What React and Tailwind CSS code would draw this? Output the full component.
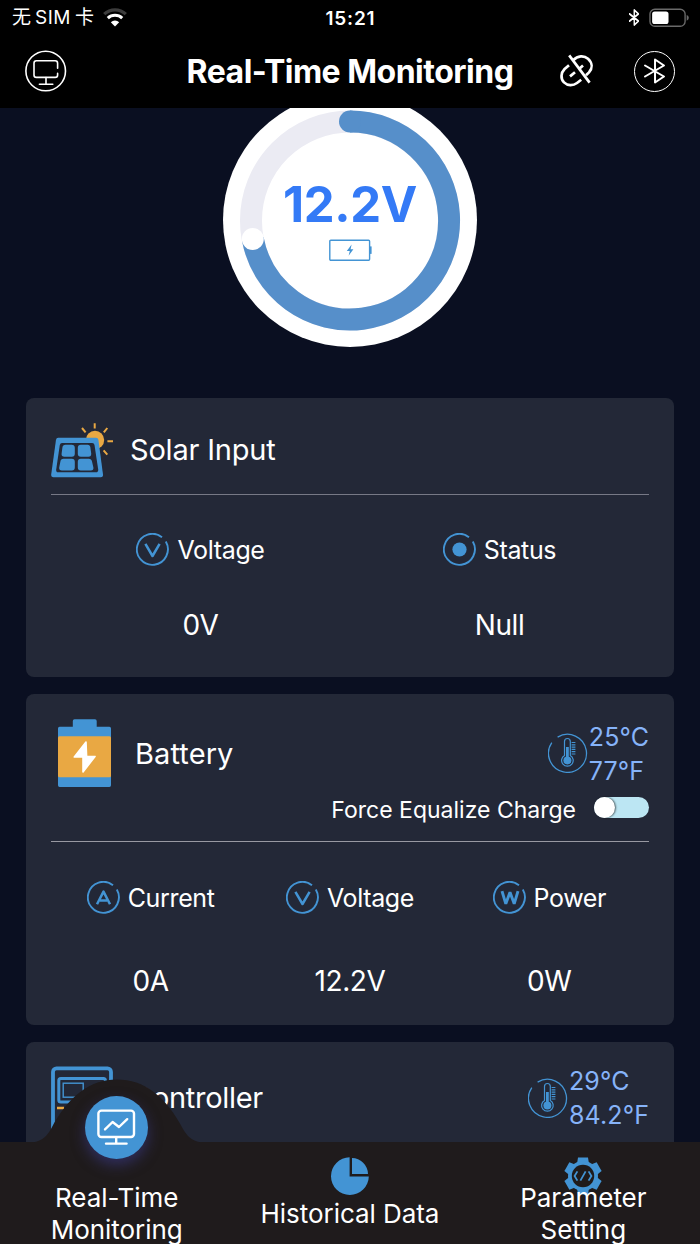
import React, { useState } from 'react';

const BLUE = '#4394d4';
const ORANGE = '#e9a843';

const BluetoothGlyph = ({ className, strokeWidth = 2 }) => (
  <svg viewBox="0 0 20 26" preserveAspectRatio="none" className={className} fill="none" stroke="white" strokeWidth={strokeWidth} strokeLinejoin="round" strokeLinecap="round">
    <path d="M1 7.5 L19 18.5 L10.5 24.5 V1.5 L19 7.5 L1 18.5" />
  </svg>
);

const StatusBar = () => (
  <div className="flex h-9 items-center justify-between bg-black pl-3 pr-[11px] text-white">
    <div className="flex w-[200px] items-center">
      <span className="text-[19px] font-normal leading-9">无</span>
      <span className="ml-[4px] text-[19px] leading-9 tracking-[0.5px]">SIM</span>
      <span className="ml-[4px] text-[19px] font-normal leading-9">卡</span>
      <svg width="26" height="19" viewBox="0 0 26 19" className="-mt-[2px] ml-[8px]" fill="none">
        <path d="M2.2 6.2 A15.5 15.5 0 0 1 23.8 6.2" stroke="#3c3c3c" strokeWidth="3.2" />
        <path d="M5.8 10.2 A10.4 10.4 0 0 1 20.2 10.2" stroke="white" strokeWidth="3" />
        <path d="M13 18.5 L8.8 14.2 A6 6 0 0 1 17.2 14.2 Z" fill="white" />
      </svg>
    </div>
    <span className="mt-px text-[19px] font-semibold leading-9 tracking-[0.8px]">15:21</span>
    <div className="flex w-[200px] items-center justify-end">
      <BluetoothGlyph className="-mt-px mr-[10px] h-[17px] w-[10px]" strokeWidth={2.8} />
      <svg width="40" height="20" viewBox="0 0 41 20" className="-mt-px">
        <rect x="1" y="1" width="36" height="17.5" rx="5" fill="none" stroke="#6a6a6a" strokeWidth="1.4" />
        <rect x="3.2" y="3.4" width="16.8" height="12.8" rx="2.6" fill="white" />
        <path d="M38.6 7 Q40.8 7.6 40.8 9.8 Q40.8 12 38.6 12.8 Z" fill="#6a6a6a" />
      </svg>
    </div>
  </div>
);

const Header = () => (
  <header className="flex h-[72px] items-center justify-between bg-black pb-[2px] pl-[25px] pr-[25px] text-white">
    <div className="w-[150px]">
      <svg width="42" height="42" viewBox="0 0 42 42" fill="none" stroke="white" strokeWidth="1.6" strokeLinecap="round">
        <circle cx="20.7" cy="21" r="19.8" />
        <path d="M32.6 18.3 V13.2 Q32.6 10.8 30.2 10.8 H11.4 Q9 10.8 9 13.2 V25 Q9 27.4 11.4 27.4 H30.2 Q32.6 27.4 32.6 25 V23.4" />
        <path d="M21 27.6 V34 M14.4 34.2 H27.8" />
      </svg>
    </div>
    <h1 className="mt-[2px] whitespace-nowrap text-[32px] font-bold leading-10 tracking-[-0.5px]">Real-Time Monitoring</h1>
    <div className="flex w-[150px] items-center justify-end">
      <svg width="36" height="34" viewBox="0 0 36 34" className="mr-[39px]" fill="none" stroke="white" strokeWidth="2.7">
        <path d="M14.4 6 C18.6 1.6 25 1.2 29 4.8 C33.6 9 33.6 14.4 30 18.4 L27 21.2" />
        <path d="M10 11.2 L5.6 15 C1.8 18.8 1.4 24.8 5 28.4 C8.6 32 14.2 31.8 18 29 L22.2 25.8" />
        <path d="M11 22.4 L16 18.2 M20.6 14.4 L24 11.4" />
        <path d="M10.2 1.4 L30.6 28.6" />
      </svg>
      <div className="flex h-[41px] w-[41px] items-center justify-center rounded-full border-[1.5px] border-white">
        <BluetoothGlyph className="h-[26px] w-[21px] -ml-px" strokeWidth={1.9} />
      </div>
    </div>
  </header>
);

const Gauge = ({ value }) => (
  <div className="relative mx-auto -mt-[15px] flex h-[254px] w-[254px] flex-col items-center rounded-full bg-white">
    <svg viewBox="0 0 254 254" className="absolute inset-0 h-full w-full" fill="none">
      <circle cx="127" cy="127.5" r="99" stroke="#ebebf3" strokeWidth="22" />
      <path d="M127 28.5 A99 99 0 1 1 29.8 146" stroke="#568fca" strokeWidth="22" />
      <circle cx="127" cy="28.5" r="11" fill="#568fca" />
      <circle cx="29.8" cy="146" r="11" fill="white" />
    </svg>
    <span className="relative mt-[82px] text-[49px] font-bold leading-[60px] tracking-[-0.4px] text-[#347af6]">{value}</span>
    <svg width="43" height="22" viewBox="0 0 43 22" className="relative mt-[4px]">
      <rect x="0.8" y="1.2" width="39.8" height="20" rx="1" fill="none" stroke={BLUE} strokeWidth="1.4" />
      <rect x="40.6" y="7.4" width="2" height="7.5" fill={BLUE} />
      <path d="M22.6 5.6 L17.8 12 H20.8 L19.6 16.8 L24.4 10.2 H21.6 Z" fill={BLUE} />
    </svg>
  </div>
);

const SolarIcon = () => (
  <svg width="63" height="55" viewBox="0 0 63 55">
    <g stroke={ORANGE} strokeWidth="2">
      <path d="M43.7 0.3 V5.6 M31 5 L34.6 9.4 M56.3 5 L52.8 9.4 M56.4 18.3 H62 M52.6 27.4 L56.3 31.6" />
    </g>
    <circle cx="44" cy="17" r="9.2" fill={ORANGE} />
    <path d="M7.2 14.8 H45 Q47 14.8 47.4 16.8 L52 51.6 Q52.2 54.2 49.8 54.2 H2.4 Q0 54.2 0.2 51.6 L5 16.8 Q5.3 14.8 7.2 14.8 Z" fill={BLUE} />
    <path d="M11 20 H41.2 Q43.1 20 43.5 22 L47.2 46.4 Q47.4 49.2 45 49.2 H7.2 Q4.8 49.2 5.2 46.4 L8.8 22 Q9.2 20 11 20 Z" fill="#232837" />
    <g fill={BLUE}>
      <path d="M14.4 21.8 H20.6 Q23.8 21.8 23.8 24.8 V30.8 Q23.8 33.8 20.8 33.8 H13.4 Q10.2 33.8 10.6 30.8 L11.4 24.6 Q11.8 21.8 14.4 21.8 Z" />
      <path d="M29.8 21.8 H36.6 Q39 21.8 39.4 24.6 L40.2 30.8 Q40.4 33.8 37.4 33.8 H29.8 Q26.8 33.8 26.8 30.8 V24.8 Q26.8 21.8 29.8 21.8 Z" />
      <path d="M12.4 35.8 H20.8 Q23.8 35.8 23.8 38.8 V44.6 Q23.8 47.6 20.8 47.6 H11 Q7.8 47.6 8.2 44.6 L9.4 38.6 Q9.8 35.8 12.4 35.8 Z" />
      <path d="M29.8 35.8 H37.8 Q40.4 35.8 41 38.6 L42.4 44.6 Q42.8 47.6 39.8 47.6 H29.8 Q26.8 47.6 26.8 44.6 V38.8 Q26.8 35.8 29.8 35.8 Z" />
    </g>
  </svg>
);

const BatteryIcon = () => (
  <svg width="53" height="68" viewBox="0 0 53 68">
    <path d="M16.5 0.3 H37 Q38.7 0.3 38.7 2 V7.8 H51.4 Q53 7.8 53 9.4 V66.2 Q53 68 51.4 68 H1.6 Q0 68 0 66.2 V9.4 Q0 7.8 1.6 7.8 H14.8 V2 Q14.8 0.3 16.5 0.3 Z" fill={BLUE} />
    <rect y="17.2" width="53" height="41" rx="1.5" fill={ORANGE} />
    <path d="M28 23 L16.3 38 H25 V53 L37 37.5 H28.6 Z" fill="white" stroke="white" strokeWidth="1.6" strokeLinejoin="round" />
  </svg>
);

const ControllerIcon = () => (
  <svg width="63" height="76" viewBox="0 0 63 76" fill="none">
    <rect x="2" y="2.4" width="58" height="72" rx="3.5" stroke={BLUE} strokeWidth="3.8" />
    <rect x="7.8" y="12.6" width="46.6" height="23.4" rx="2" stroke={BLUE} strokeWidth="3" />
    <rect x="12.2" y="17.2" width="20" height="14" stroke={BLUE} strokeWidth="1.4" />
    <path d="M6 42 H13 M15 42 H22 M8 50.4 H13" stroke={ORANGE} strokeWidth="2.6" />
  </svg>
);

const glyphs = {
  V: <path d="M9.4 10.8 L16.5 23 L23.6 10.8" strokeLinejoin="round" strokeWidth="2.5" />,
  A: <path d="M10 23.2 L16.5 10.6 L23 23.2 M13 19.4 H20" strokeLinejoin="round" strokeWidth="2.5" />,
  W: <path d="M9 10.2 L12.8 22.8 L17 11.2 L21.2 22.8 L25 10.2" strokeLinejoin="bevel" strokeWidth="2.9" />,
  dot: <circle cx="16.5" cy="16.5" r="7.1" fill={BLUE} stroke="none" />,
};

const MetricIcon = ({ glyph }) => (
  <svg width="33" height="33" viewBox="0 0 33 33" fill="none" stroke={BLUE} className="shrink-0">
    <path d="M26 4.2 A15.5 15.5 0 1 0 29.8 8.6" strokeWidth="1.9" />
    {glyphs[glyph]}
  </svg>
);

const Metric = ({ glyph, label, value, valueClass }) => (
  <div className="flex flex-1 flex-col items-center">
    <div className="flex h-[33px] items-center gap-2">
      <MetricIcon glyph={glyph} />
      <span className="mt-px text-[25px] leading-[34px] tracking-[-0.35px]">{label}</span>
    </div>
    <span className={`text-[28px] leading-9 tracking-[-0.4px] ${valueClass}`}>{value}</span>
  </div>
);

const Temperature = ({ celsius, fahrenheit }) => (
  <div className="flex items-center gap-[2px]">
    <svg width="40" height="40" viewBox="0 0 40 40" fill="none" stroke={BLUE}>
      <path d="M9.6 4.1 A19 19 0 1 1 3.8 9.6" strokeWidth="1.3" />
      <path d="M16.5 22.4 V8.4 A2.9 2.9 0 0 1 22.3 8.4 V22.4 A5.8 5.8 0 1 1 16.5 22.4 Z" strokeWidth="1.2" />
      <path d="M19.4 14 V26" strokeWidth="2.8" />
      <circle cx="19.4" cy="27.4" r="4" fill={BLUE} stroke="none" />
      <path d="M23.6 9.5 H27.4 M23.6 11.8 H27.4 M23.6 14.1 H27.4 M23.6 16.4 H27.4 M23.6 18.7 H27.4 M23.6 21 H27.4" strokeWidth="1.2" />
    </svg>
    <div className="-ml-px mt-px text-[25px] leading-[34px] tracking-[0.1px] text-[#86b3f9]">
      <div>{celsius}</div>
      <div>{fahrenheit}</div>
    </div>
  </div>
);

const navItems = [
  { label: 'Real-Time Monitoring', id: 'monitor' },
  { label: 'Historical Data', id: 'history' },
  { label: 'Parameter Setting', id: 'settings' },
];

const NavIcon = ({ id }) => {
  if (id === 'monitor') {
    return (
      <div className="relative -mt-[46px] mb-[23px] flex h-[63px] w-[63px] shrink-0 items-center justify-center rounded-full bg-[#4394d4] shadow-[0_6px_14px_rgba(62,62,150,0.55)]">
        <svg width="39" height="37" viewBox="0 0 39 37" fill="none" stroke="white" strokeWidth="2.4" strokeLinecap="round" strokeLinejoin="round">
          <rect x="1.4" y="1.6" width="35.6" height="26.4" rx="3" />
          <path d="M8 20.4 L15.6 13 L22 18 L30.2 10.2" />
          <path d="M19.2 28.2 V34 M9 34.6 H29.6" />
        </svg>
      </div>
    );
  }
  if (id === 'history') {
    return (
      <svg width="38" height="38" viewBox="0 0 38 38" className="-mb-[13px] mt-[15px] shrink-0" fill={BLUE}>
        <path d="M18.6 0.2 V19.4 H37.8 A18.9 18.9 0 1 1 18.6 0.2 Z" />
        <path d="M21 1 A16.5 16.5 0 0 1 37 17 H21 Z" />
      </svg>
    );
  }
  return (
    <svg width="38" height="38" viewBox="-19 -19 38 38" className="-mb-[13px] mt-[15px] shrink-0">
      <g fill={BLUE}>
        {[0, 60, 120, 180, 240, 300].map((deg) => (
          <path key={deg} d="M-5 -18.6 H5 L6 -12 H-6 Z" transform={`rotate(${deg})`} />
        ))}
        <circle r="15" />
      </g>
      <circle r="11.2" fill="#1f1b1c" />
      <path d="M-5.6 -4.6 L-8.4 0 L-5.6 4.6 M5.6 -4.6 L8.4 0 L5.6 4.6 M2.6 -4.6 L-2.6 4.6" fill="none" stroke={BLUE} strokeWidth="1.8" />
    </svg>
  );
};

const BottomNav = () => (
  <nav className="relative z-10 flex h-[102px] shrink-0 bg-[#1f1b1c] text-white">
    <svg width="166" height="64" viewBox="0 0 166 64" className="absolute -top-[63px] left-[34px]">
      <path d="M0 64 V63.2 C8 62 13 57 17 50 C34 17 56 0.4 83 0.4 C110 0.4 132 17 149 50 C153 57 158 62 166 63.2 V64 Z" fill="#1f1b1c" />
    </svg>
    {navItems.map((item) => (
      <button key={item.id} className="flex flex-1 flex-col items-center">
        <NavIcon id={item.id} />
        <span className="relative flex h-16 w-[190px] shrink-0 items-center justify-center text-center text-[26px] leading-8 tracking-[-0.05px]">
          {item.label}
        </span>
      </button>
    ))}
  </nav>
);

const App = () => {
  const [equalize, setEqualize] = useState(false);

  return (
    <div className="flex h-[1244px] w-[700px] flex-col overflow-hidden bg-[#0a0f21] font-['Inter','Noto_Sans_CJK_SC',sans-serif] text-white">
      <StatusBar />
      <Header />

      <main className="min-h-0 flex-1 overflow-hidden">
        <Gauge value="12.2V" />

        <div className="mt-[51px] flex flex-col gap-[17px] px-[26px]">
          <section className="h-[279px] rounded-[8px] bg-[#232837] px-[25px]">
            <div className="flex h-[97px] items-start gap-4 border-b border-[#777986] pt-[25px]">
              <SolarIcon />
              <h2 className="text-[29px] leading-[54px] tracking-[-0.2px]">Solar Input</h2>
            </div>
            <div className="flex pt-[38px]">
              <Metric glyph="V" label="Voltage" value="0V" valueClass="mt-[41px]" />
              <Metric glyph="dot" label="Status" value="Null" valueClass="mt-[41px]" />
            </div>
          </section>

          <section className="h-[331px] rounded-[8px] bg-[#232837] px-[25px]">
            <div className="h-[148px] border-b border-[#9899a2] pt-[25px]">
              <div className="flex h-[68px] items-center">
                <div className="ml-[7px]">
                  <BatteryIcon />
                </div>
                <h2 className="ml-6 mt-[2px] flex-1 text-[29px] leading-[54px] tracking-[0.1px]">Battery</h2>
                <Temperature celsius="25°C" fahrenheit="77°F" />
              </div>
              <div className="mt-[7px] flex items-center justify-end">
                <span className="text-[23px] leading-8">Force Equalize Charge</span>
                <button
                  onClick={() => setEqualize(!equalize)}
                  className={`-mt-[6px] ml-[18px] flex h-[21px] w-[55px] rounded-full bg-[#bce6f3] ${equalize ? 'justify-end' : 'justify-start'}`}
                >
                  <span className="h-[21px] w-[21px] rounded-full bg-white shadow-[1px_0_2px_rgba(0,0,0,0.6)]" />
                </button>
              </div>
            </div>
            <div className="flex pt-[39px]">
              <Metric glyph="A" label="Current" value="0A" valueClass="mt-[49px]" />
              <Metric glyph="V" label="Voltage" value="12.2V" valueClass="mt-[49px]" />
              <Metric glyph="W" label="Power" value="0W" valueClass="mt-[49px]" />
            </div>
          </section>

          <section className="h-[330px] rounded-[8px] bg-[#232837] px-[25px] pt-[24px]">
            <div className="flex h-[63px] items-center">
              <div className="h-[63px]">
                <ControllerIcon />
              </div>
              <h2 className="ml-[17px] flex-1 text-[29px] leading-[54px] tracking-[-0.3px]">Controller</h2>
              <Temperature celsius="29°C" fahrenheit="84.2°F" />
            </div>
          </section>
        </div>
      </main>

      <BottomNav />
    </div>
  );
};

export default App;
